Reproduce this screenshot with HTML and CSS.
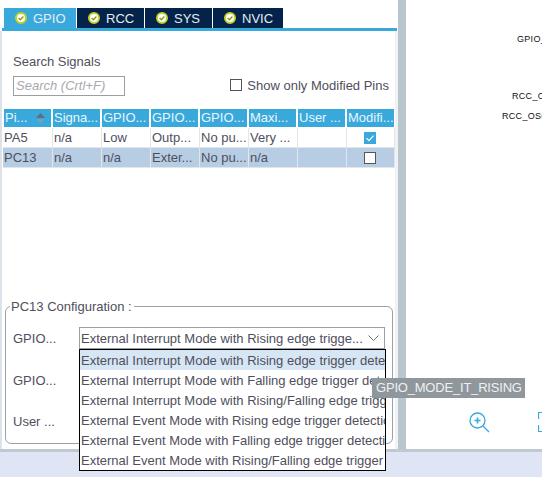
FILE: index.html
```html
<!DOCTYPE html>
<html>
<head>
<meta charset="utf-8">
<link rel="stylesheet" href="styles.css">
</head>
<body>
<div class="app">
  <div class="main">
    <section class="panel">
      <nav class="tabs">
        <div class="tab active"><svg class="ok" viewBox="0 0 12 12"><circle cx="6" cy="6" r="5" fill="#fff" stroke="#c3d02a" stroke-width="2"/><path d="M3.6 6l1.8 1.8 3-3.2" fill="none" stroke="#8a9a1a" stroke-width="1.4"/></svg>GPIO</div>
        <div class="tab"><svg class="ok" viewBox="0 0 12 12"><circle cx="6" cy="6" r="5" fill="#fff" stroke="#c3d02a" stroke-width="2"/><path d="M3.6 6l1.8 1.8 3-3.2" fill="none" stroke="#8a9a1a" stroke-width="1.4"/></svg>RCC</div>
        <div class="tab"><svg class="ok" viewBox="0 0 12 12"><circle cx="6" cy="6" r="5" fill="#fff" stroke="#c3d02a" stroke-width="2"/><path d="M3.6 6l1.8 1.8 3-3.2" fill="none" stroke="#8a9a1a" stroke-width="1.4"/></svg>SYS</div>
        <div class="tab"><svg class="ok" viewBox="0 0 12 12"><circle cx="6" cy="6" r="5" fill="#fff" stroke="#c3d02a" stroke-width="2"/><path d="M3.6 6l1.8 1.8 3-3.2" fill="none" stroke="#8a9a1a" stroke-width="1.4"/></svg>NVIC</div>
      </nav>
      <div class="panel-body">
        <div class="search">
          <div class="search-left">
            <div class="search-title">Search Signals</div>
            <div class="search-input">Search (Crtl+F)</div>
          </div>
          <label class="only"><span class="box"></span>Show only Modified Pins</label>
        </div>
        <div class="table">
          <div class="row head">
            <div class="cell pin-head">Pi...<svg class="sort" viewBox="0 0 9 11"><path d="M4.5 0L9 5H0z" fill="#5b6f80"/><path d="M4.5 11L9 6H0z" fill="#6fa0bf"/></svg></div>
            <div class="cell">Signa...</div><div class="cell">GPIO...</div><div class="cell">GPIO...</div><div class="cell">GPIO...</div><div class="cell">Maxi...</div><div class="cell">User ...</div><div class="cell">Modifi...</div>
          </div>
          <div class="row">
            <div class="cell">PA5</div><div class="cell">n/a</div><div class="cell">Low</div><div class="cell">Outp...</div><div class="cell">No pu...</div><div class="cell">Very ...</div><div class="cell"></div>
            <div class="cell center"><svg class="check" viewBox="0 0 12 12"><rect width="12" height="12" fill="#39a9dc"/><path d="M2.5 6.2l2.5 2.5 4.5-5" fill="none" stroke="#fff" stroke-width="1.2"/></svg></div>
          </div>
          <div class="row selected">
            <div class="cell">PC13</div><div class="cell">n/a</div><div class="cell">n/a</div><div class="cell">Exter...</div><div class="cell">No pu...</div><div class="cell">n/a</div><div class="cell"></div>
            <div class="cell center"><span class="box"></span></div>
          </div>
        </div>
      </div>
      <fieldset class="config">
        <legend>PC13 Configuration :</legend>
        <div class="field">
          <span class="field-label">GPIO...</span>
          <div class="select"><span class="select-text">External Interrupt Mode with Rising edge trigge...</span><svg class="chev" viewBox="0 0 11 6"><path d="M.5.5l5 5 5-5" fill="none" stroke="#6d7780" stroke-width="1"/></svg></div>
        </div>
        <div class="field"><span class="field-label">GPIO...</span></div>
        <div class="field"><span class="field-label">User ...</span></div>
      </fieldset>
      <ul class="dropdown">
        <li class="hl">External Interrupt Mode with Rising edge trigger detection</li>
        <li>External Interrupt Mode with Falling edge trigger detection</li>
        <li>External Interrupt Mode with Rising/Falling edge trigger detection</li>
        <li>External Event Mode with Rising edge trigger detection</li>
        <li>External Event Mode with Falling edge trigger detection</li>
        <li>External Event Mode with Rising/Falling edge trigger detection</li>
      </ul>
    </section>
    <div class="splitter"></div>
    <section class="canvas">
      <span class="pin pin1">GPIO_EXTI13</span>
      <span class="pin pin2">RCC_OSC_IN</span>
      <span class="pin pin3">RCC_OSC_OUT</span>
      <svg class="zoom-icon" viewBox="0 0 22 22"><circle cx="8.5" cy="8.5" r="7.5" fill="none" stroke="#39a9dc" stroke-width="1.3"/><path d="M5.5 8.5h6M8.5 5.5v6" stroke="#39a9dc" stroke-width="1.6"/><path d="M14 14l6 6" stroke="#39a9dc" stroke-width="1.3"/></svg>
      <svg class="fit-icon" viewBox="0 0 20 20"><path d="M6 .5H.5V7M.5 13v6.500H6M14 .5h5.500V7M19.500 13v6.500H14" fill="none" stroke="#39a9dc" stroke-width="1.2"/></svg>
    </section>
  </div>
  <div class="footer"></div>
  <div class="tooltip">GPIO_MODE_IT_RISING</div>
</div>
</body>
</html>
```
FILE: styles.css
```css
html, body { margin: 0; padding: 0; }
body { width: 542px; height: 477px; overflow: hidden; font-family: "Liberation Sans", Arial, sans-serif; color: #4f4f5c; background: #fff; }
.app { position: relative; width: 542px; height: 477px; display: flex; flex-direction: column; overflow: hidden; }
.main { height: 452px; box-sizing: border-box; display: flex; border-bottom: 3px solid #bfcad0; }
.panel { position: relative; width: 398px; box-sizing: border-box; padding-top: 8px; display: flex; flex-direction: column; background: #fff; }
.tabs { display: flex; height: 20px; border-bottom: 3px solid #39a9dc; margin-left: 2px; margin-right: 1px; padding-left: 2px; gap: 1px; flex: none; }
.tab { width: 67px; box-sizing: border-box; padding-left: 11px; background: #03234b; color: #e6edf3; font-size: 13px; display: flex; align-items: center; gap: 6px; }
.tab.active { background: #39a9dc; width: 72px; }
.tab:last-child { width: 70px; }
.tab .ok { width: 12px; height: 12px; flex: none; }
.panel-body { flex: 1; border-left: 2px solid #dbe3e8; border-right: 3px solid #f0f2f3; margin-right: 0; padding-left: 2px; }
.search { display: flex; height: 78px; box-sizing: border-box; padding: 23px 6px 0 9px; justify-content: space-between; }
.search-title { font-size: 13px; line-height: 15px; }
.search-input { width: 108px; height: 18px; margin-top: 7px; border: 1px solid #9a9fa3; font-size: 13px; font-style: italic; color: #a9a9ae; line-height: 18px; padding-left: 2px; white-space: nowrap; }
.only { display: flex; align-items: center; gap: 5px; font-size: 13px; height: 16px; margin-top: 23px; }
.box { display: inline-block; width: 10px; height: 10px; border: 1px solid #555; background: #fff; }
.table { margin-left: -1px; width: 392px; }
.row { display: grid; grid-template-columns: 50px repeat(6, 49px) 48px; height: 20px; }
.row > .cell { font-size: 13px; line-height: 19px; padding-left: 1px; overflow: hidden; white-space: nowrap; box-sizing: border-box; border-right: 1px solid #e2e6e9; border-bottom: 1px solid #e2e6e9; }
.row.head { height: 19px; margin-left: 1px; grid-template-columns: repeat(7, 49px) 47px; }
.row.head > .cell { background: #39a9dc; color: #eaf6fc; border-right: 2px solid #fff; border-bottom: 1px solid #fff; line-height: 18px; display: flex; align-items: center; }
.row.head > .cell:last-child { border-right: 0; }
.row.head > .pin-head { justify-content: space-between; padding-right: 6px; }
.sort { width: 9px; height: 11px; }
.selected > .cell { background: #b7cde4; }
.row > .center { display: flex; align-items: center; justify-content: center; padding-left: 0; padding-right: 2px; }
.check { width: 12px; height: 12px; }
.config { position: absolute; left: 5px; top: 299px; width: 388px; height: 145px; margin: 0; padding: 13px 0 0; box-sizing: border-box; border: 1px solid #9ba1a6; border-radius: 6px; background: #fff; }
.config legend { font-size: 13px; padding: 0 2px 0 1px; margin-left: 4px; line-height: 15px; }
.field { height: 41.5px; display: flex; align-items: flex-start; padding-left: 7px; }
.field-label { font-size: 13px; width: 66px; line-height: 24px; }
.select { width: 306px; height: 22px; box-sizing: border-box; border: 1px solid #9a9fa3; display: flex; align-items: center; justify-content: space-between; padding: 0 5px 0 1px; font-size: 13px; background: #fff; }
.select-text { white-space: nowrap; width: 285px; overflow: hidden; }
.chev { width: 11px; height: 6px; flex: none; }
.dropdown { position: absolute; left: 79px; top: 349px; width: 305px; height: 120px; margin: 0; padding: 0; list-style: none; border: 1px solid #000; background: #fff; overflow: hidden; }
.dropdown li { height: 20px; line-height: 21px; font-size: 13px; padding-left: 1px; white-space: nowrap; }
.dropdown li.hl { background: #d7e6f4; }
.splitter { width: 8px; background: #b9c6cd; }
.canvas { position: relative; flex: 1; background: #fff; }
.pin { position: absolute; font-size: 9px; color: #111; letter-spacing: .3px; white-space: nowrap; line-height: 10px; }
.pin1 { left: 111px; top: 34px; }
.pin2 { left: 106px; top: 91px; }
.pin3 { left: 96px; top: 111px; }
.zoom-icon { position: absolute; left: 63px; top: 412px; width: 22px; height: 22px; }
.fit-icon { position: absolute; left: 132px; top: 412px; width: 20px; height: 20px; }
.footer { flex: 1; background: #dfe5f4; }
.tooltip { position: absolute; left: 372px; top: 378px; height: 20px; width: 149px; background: #8f979c; color: #eef1f3; font-size: 13px; letter-spacing: -.2px; line-height: 20px; padding-left: 4px; white-space: nowrap; }
```
